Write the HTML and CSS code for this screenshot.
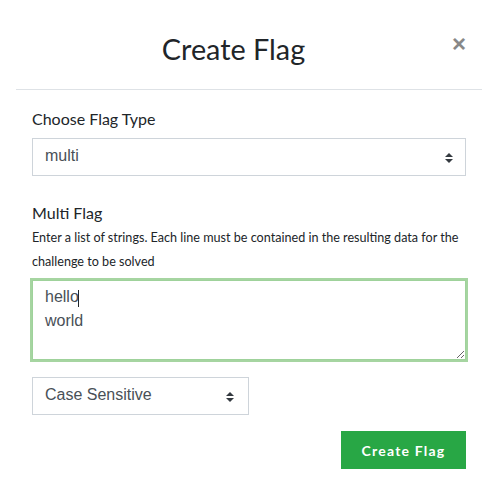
FILE: index.html
```html
<!DOCTYPE html>
<html lang="en">
<head>
<meta charset="utf-8">
<title>Create Flag</title>
<link rel="stylesheet" href="styles.css">
</head>
<body>
<div class="modal">
  <div class="modal-header">
    <h2 class="modal-title">Create Flag</h2>
    <button class="close" type="button" aria-label="Close">×</button>
  </div>
  <form class="modal-body">
    <div class="group group-type">
      <label class="label">Choose Flag Type</label>
      <div class="select-wrap select-full">
        <select class="select"><option>multi</option></select>
        <svg class="arrows" width="8" height="10" viewBox="0 0 8 10"><path d="M4 0 L8 4 L0 4 Z M0 6 L8 6 L4 10 Z" fill="#343a40"/></svg>
      </div>
    </div>
    <div class="group">
      <label class="label">Multi Flag</label>
      <p class="help">Enter a list of strings. Each line must be contained in the resulting data for the challenge to be solved</p>
      <div class="textarea-wrap">
        <textarea class="textarea" rows="3">hello
world</textarea>
        <span class="caret"></span>
      </div>
    </div>
    <div class="select-wrap select-case">
      <select class="select"><option>Case Sensitive</option></select>
      <svg class="arrows" width="8" height="10" viewBox="0 0 8 10"><path d="M4 0 L8 4 L0 4 Z M0 6 L8 6 L4 10 Z" fill="#343a40"/></svg>
    </div>
    <div class="actions">
      <button class="btn" type="button">Create Flag</button>
    </div>
  </form>
</div>
</body>
</html>
```

FILE: styles.css
```css
* { box-sizing: border-box; }
html, body { margin: 0; padding: 0; background: #fff; }
body { font-family: "Lato", "Liberation Sans", sans-serif; color: #212529; }

.modal { width: 495px; }

.modal-header {
  display: flex;
  align-items: flex-start;
  margin: 0 13px 0 16px;
  padding: 31px 0 22px;
  border-bottom: 1px solid #dee2e6;
}
.modal-title {
  flex: 1;
  margin: 0;
  text-align: center;
  font-family: "Lato", sans-serif;
  font-weight: 400;
  font-size: 28.8px;
  line-height: 36px;
  color: #212529;
}
.close {
  width: 31px;
  margin: 0;
  padding: 0 0 0 1px;
  border: 0;
  background: none;
  text-align: left;
  font-family: "Liberation Sans", sans-serif;
  font-weight: 700;
  font-size: 24px;
  line-height: 26px;
  color: #888;
}

.modal-body { padding: 17px 29px 0 32px; margin: 0; }

.group-type { margin-bottom: 25px; }
.label {
  display: block;
  font-size: 16px;
  line-height: 24px;
  color: #212529;
}
.group-type .label { margin-bottom: 7px; }

.help {
  margin: 1px 0 6px;
  font-size: 12.6px;
  line-height: 24px;
  color: #212529;
}

.select-wrap { position: relative; }
.select-full { width: 434px; }
.select-case { width: 217px; margin-top: 17px; }
.select {
  display: block;
  width: 100%;
  height: 38px;
  margin: 0;
  padding: 0 12px 4px;
  border: 1px solid #ced4da;
  border-radius: 0;
  background: #fff;
  appearance: none;
  -webkit-appearance: none;
  font-family: "Liberation Sans", sans-serif;
  font-size: 16px;
  color: #495057;
}
.arrows { position: absolute; right: 13px; top: 15px; }
.select-case .arrows { right: 15px; top: 15px; }

.textarea-wrap { position: relative; width: 434px; }
.textarea {
  display: block;
  width: 434px;
  height: 80px;
  margin: 2px 0 0;
  padding: 4px 12px;
  border: 1px solid #9fd29b;
  box-shadow: 0 0 0 2px #a6d5a1;
  border-radius: 0;
  outline: none;
  font-family: "Liberation Sans", sans-serif;
  font-size: 16px;
  line-height: 24px;
  color: #495057;
  resize: vertical;
}
.caret {
  position: absolute;
  left: 46px;
  top: 10px;
  width: 1px;
  height: 17px;
  background: #212529;
}

.actions { display: flex; justify-content: flex-end; margin-top: 16px; }
.btn {
  width: 125px;
  height: 38px;
  padding: 0;
  border: 0;
  border-radius: 0;
  background: #28a745;
  color: #fff;
  font-family: "Lato", sans-serif;
  font-weight: 700;
  font-size: 14px;
  letter-spacing: 1.2px;
}
```
